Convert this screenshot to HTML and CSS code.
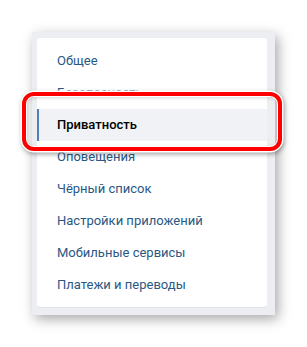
FILE: index.html
```html
<!DOCTYPE html>
<html lang="ru">
<head>
  <meta charset="UTF-8">
  <title>Настройки</title>
  <link rel="stylesheet" href="styles.css">
</head>
<body>
<div class="frame">
  <div class="menu">
    <div class="item">Общее</div>
    <div class="item">Безопасность</div>
    <div class="item selected">Приватность</div>
    <div class="item">Оповещения</div>
    <div class="item">Чёрный список</div>
    <div class="item">Настройки приложений</div>
    <div class="item">Мобильные сервисы</div>
    <div class="item">Платежи и переводы</div>
  </div>
</div>
<div class="mark"></div>
</body>
</html>
```

FILE: styles.css
```css
body {margin: 0; background: #fff; font-family: Roboto, "Open Sans", sans-serif; width: 307px; height: 347px; position: relative; overflow: hidden;}
.frame {margin: 32px 0 0 32px; width: 243px; height: 283px; box-sizing: border-box; padding: 6px 8px 8px 5px; background: #eceef1; box-shadow: 3px 4px 12px rgba(0,0,0,.35);}
.menu {background: #fff; border-radius: 3px; padding: 7px 0 6px; box-shadow: 0 1px 0 #dfe2e8;}
.item {height: 32px; line-height: 32px; padding-left: 20px; font-size: 13px; color: #2a5885; white-space: nowrap; overflow: hidden;}
.selected {background: #f0f2f5; color: #000; font-weight: 500; border-left: 2px solid #5181b8; padding-left: 18px;}
.mark {position: absolute; left: 22px; top: 92px; width: 260px; height: 59px; box-sizing: border-box; border: 4px solid #f00; border-radius: 12px; box-shadow: 0 0 0 1.5px #fff, 1px 2px 5px 1px rgba(0,0,0,.4), inset 0 0 0 1px #fff, inset 1px 1px 4px rgba(0,0,0,.25);}
```
